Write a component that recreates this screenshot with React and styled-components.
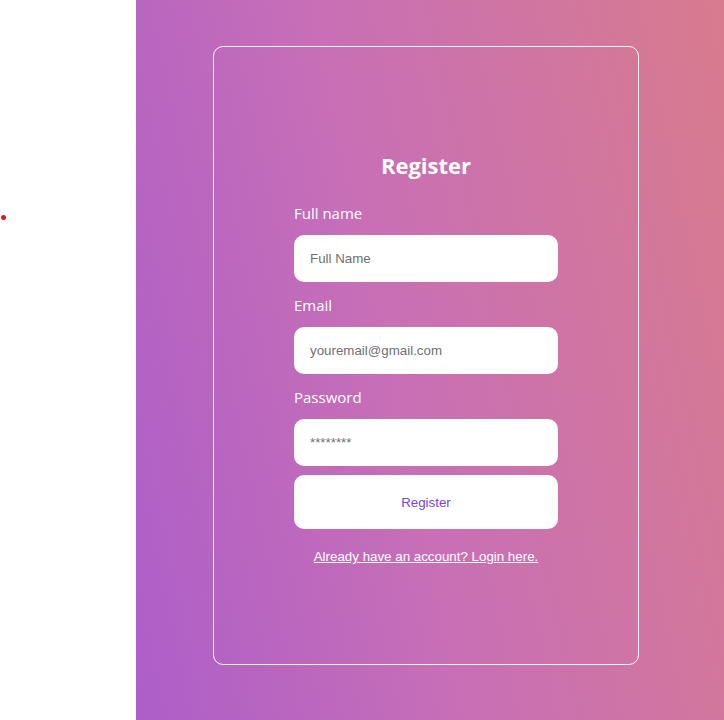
import React from 'react';
import styled, { createGlobalStyle } from 'styled-components';

const GlobalStyle = createGlobalStyle`
  html, body {
    margin: 0;
    padding: 0;
    height: 100%;
  }
  body {
    font-family: "Open Sans", "Noto Sans", sans-serif;
  }
`;

const Page = styled.div`
  display: flex;
  width: 100%;
  height: 720px;
`;

const Sidebar = styled.aside`
  width: 136px;
  flex-shrink: 0;
  background: #fff;
  padding-top: 215px;
  box-sizing: border-box;
`;

const Dot = styled.span`
  display: block;
  width: 5px;
  height: 5px;
  margin-left: 1px;
  border-radius: 50%;
  background: #e8141c;
`;

const Main = styled.main`
  flex: 1;
  background: linear-gradient(78deg, #ad5ec9 0%, #c86fb6 45%, #d87b8e 100%);
  padding: 46px 0 0 77px;
  box-sizing: border-box;
`;

const Card = styled.div`
  width: 426px;
  height: 619px;
  box-sizing: border-box;
  border: 1px solid rgba(255, 255, 255, 0.95);
  border-radius: 10px;
  display: flex;
  flex-direction: column;
  align-items: center;
  padding-top: 102px;
`;

const Form = styled.form`
  width: 264px;
  display: flex;
  flex-direction: column;
`;

const Title = styled.h2`
  margin: 0 0 22px;
  text-align: center;
  color: #fff;
  font-size: 22px;
  line-height: 32px;
  font-weight: 700;
`;

const Label = styled.label`
  color: #fff;
  font-size: 15px;
  line-height: 20px;
  margin: ${p => (p.first ? '0' : '13px')} 0 12px;
`;

const Input = styled.input`
  height: 47px;
  box-sizing: border-box;
  border: none;
  outline: none;
  border-radius: 10px;
  padding: 0 16px;
  background: #fff;
  font-family: "Liberation Sans", Arial, sans-serif;
  font-size: 13.333px;
  color: #333;
  &::placeholder {
    color: #6f6f6f;
  }
`;

const Button = styled.button`
  margin-top: 9px;
  height: 54px;
  border: none;
  border-radius: 10px;
  background: #fff;
  color: #7346df;
  font-family: "Liberation Sans", Arial, sans-serif;
  font-size: 13.333px;
  cursor: pointer;
`;

const LoginLink = styled.a`
  margin-top: 20px;
  text-align: center;
  color: #fff;
  font-family: "Liberation Sans", Arial, sans-serif;
  font-size: 13.333px;
  line-height: 16px;
  text-decoration: underline;
`;

export default function App() {
  return (
    <>
      <GlobalStyle />
      <Page>
        <Sidebar>
          <Dot />
        </Sidebar>
        <Main>
          <Card>
            <Form onSubmit={e => e.preventDefault()}>
              <Title>Register</Title>
              <Label first htmlFor="name">Full name</Label>
              <Input id="name" type="text" placeholder="Full Name" />
              <Label htmlFor="email">Email</Label>
              <Input id="email" type="email" placeholder="youremail@gmail.com" />
              <Label htmlFor="password">Password</Label>
              <Input id="password" type="password" placeholder="********" />
              <Button type="submit">Register</Button>
              <LoginLink href="#">Already have an account? Login here.</LoginLink>
            </Form>
          </Card>
        </Main>
      </Page>
    </>
  );
}
